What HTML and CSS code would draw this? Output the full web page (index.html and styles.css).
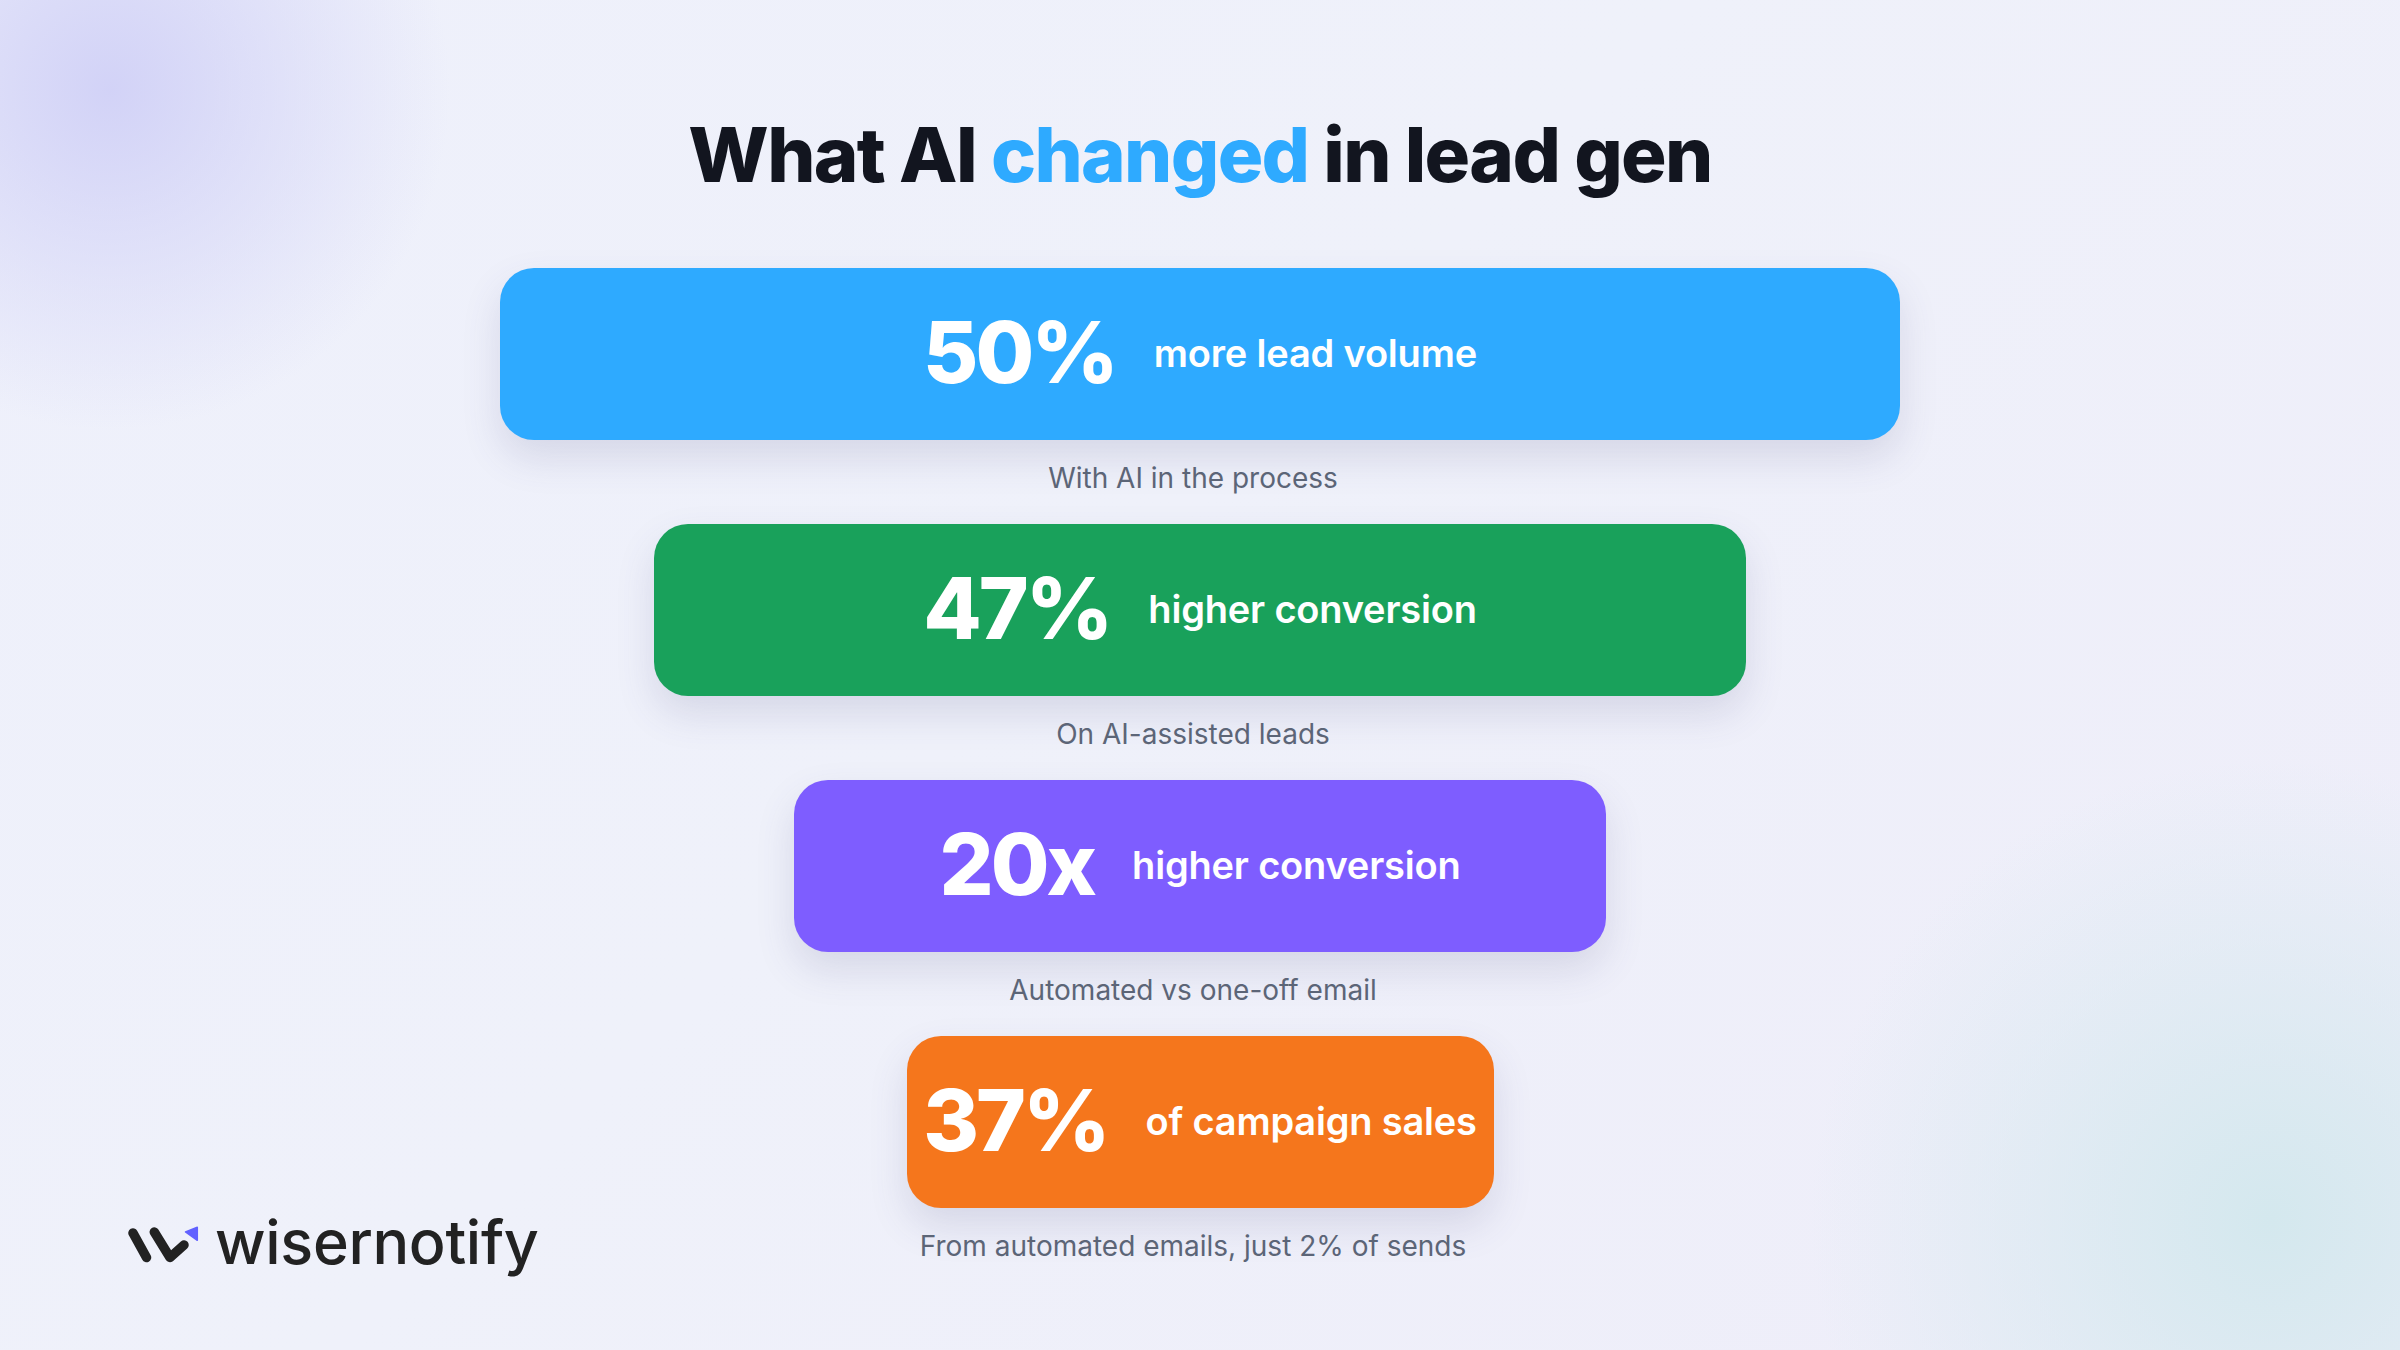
FILE: index.html
```html
<!DOCTYPE html>
<html lang="en">
<head>
<meta charset="utf-8">
<title>What AI changed in lead gen</title>
<link rel="stylesheet" href="styles.css">
</head>
<body>
<main class="page">
  <h1 class="title">What AI <span class="accent">changed</span> in lead gen</h1>
  <div class="content">
    <div class="brand">
      <svg class="brand-mark" viewBox="0 0 72 40" width="72" height="40" aria-hidden="true">
        <path d="M6 9 L19.5 33.5" stroke="#222" stroke-width="9.5" stroke-linecap="round" fill="none"/>
        <path d="M27.3 8 L43 33.5 L57 21" stroke="#222" stroke-width="9.5" stroke-linecap="round" stroke-linejoin="round" fill="none"/>
        <path d="M58.5 8 L70.3 3.3 L70.3 16.3 Z" fill="#6161FF" stroke="#6161FF" stroke-width="1.5" stroke-linejoin="round"/>
      </svg>
      <span class="brand-name">wisernotify</span>
    </div>
    <section class="funnel">
      <div class="stage">
        <div class="bar bar-blue w1"><span class="num">50%</span><span class="label">more lead volume</span></div>
        <p class="caption">With AI in the process</p>
      </div>
      <div class="stage">
        <div class="bar bar-green w2"><span class="num">47%</span><span class="label">higher conversion</span></div>
        <p class="caption">On AI-assisted leads</p>
      </div>
      <div class="stage">
        <div class="bar bar-purple w3"><span class="num">20x</span><span class="label">higher conversion</span></div>
        <p class="caption">Automated vs one-off email</p>
      </div>
      <div class="stage">
        <div class="bar bar-orange w4"><span class="num">37%</span><span class="label">of campaign sales</span></div>
        <p class="caption">From automated emails, just 2% of sends</p>
      </div>
    </section>
    <div class="spacer"></div>
  </div>
</main>
</body>
</html>
```
FILE: styles.css
```css
* { box-sizing: border-box; }

html, body {
  margin: 0;
  padding: 0;
}

body {
  width: 2400px;
  height: 1350px;
  overflow: hidden;
  font-family: "Inter", "Noto Sans", "Liberation Sans", sans-serif;
  color: #12151f;
  background:
    radial-gradient(circle at 110px 90px, rgba(205, 205, 246, 0.85) 0, rgba(205, 205, 246, 0) 340px),
    radial-gradient(circle at 2270px 1220px, rgba(212, 232, 238, 1) 0, rgba(212, 232, 238, 0) 460px),
    linear-gradient(135deg, #eef0fb 0%, #eff1fa 45%, #eeedf9 100%);
}

.page {
  height: 1350px;
  display: flex;
  flex-direction: column;
  align-items: stretch;
  padding-top: 109px;
}

.title {
  margin: 0 0 68px;
  text-align: center;
  font-size: 76px;
  line-height: 1.2;
  font-weight: 800;
  letter-spacing: -0.022em;
  color: #12151f;
}

.accent { color: #2eaaff; }

.content {
  display: grid;
  grid-template-columns: minmax(0, 1fr) auto minmax(0, 1fr);
  align-items: end;
}

.brand {
  justify-self: start;
  display: flex;
  align-items: center;
  gap: 16px;
  padding-left: 127px;
  margin-bottom: 14px;
  height: 72px;
  white-space: nowrap;
}

.brand-mark { display: block; flex: none; margin-top: 4px; }

.brand-name {
  font-size: 61px;
  line-height: 72px;
  font-weight: 500;
  color: #222222;
  letter-spacing: -0.005em;
}

.funnel {
  display: flex;
  flex-direction: column;
  align-items: center;
  width: 1400px;
}

.stage {
  display: flex;
  flex-direction: column;
  align-items: center;
  gap: 20px;
  padding-bottom: 28px;
}

.bar {
  height: 172px;
  border-radius: 34px;
  display: flex;
  align-items: center;
  justify-content: center;
  gap: 38px;
  color: #ffffff;
  box-shadow: 0 18px 38px rgba(72, 74, 130, 0.15);
}

.w1 { width: 1400px; }
.w2 { width: 1092px; }
.w3 { width: 812px; }
.w4 { width: 587px; }

.bar-blue { background: #2eaaff; }
.bar-green { background: #19a15b; }
.bar-purple { background: #7e5dff; }
.bar-orange { background: #f5761c; }

.num {
  font-size: 85px;
  line-height: 1;
  font-weight: 800;
  letter-spacing: -0.035em;
  margin-top: -4px;
}

.label {
  font-size: 38px;
  line-height: 1.2;
  font-weight: 600;
  letter-spacing: -0.005em;
}

.caption {
  margin: 0;
  padding-right: 14px;
  font-size: 28px;
  line-height: 36px;
  font-weight: 400;
  color: #5c6577;
}

.spacer { }
```
